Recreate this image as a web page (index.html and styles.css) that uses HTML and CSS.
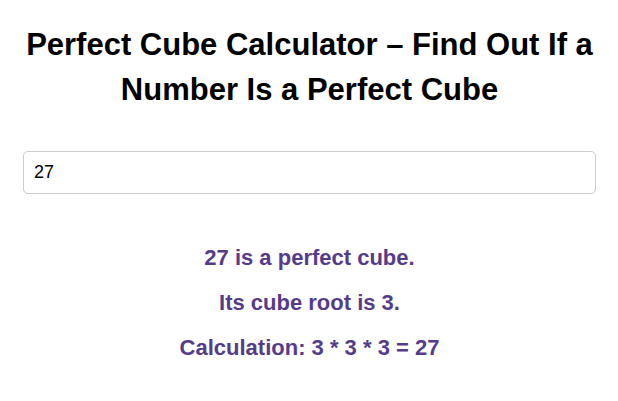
FILE: index.html
```html
<!DOCTYPE html>
<html lang="en">
    <head>
        <meta charset="UTF-8">
        <meta name="viewport" content="width=device-width, initial-scale=1.0">
        <title>Perfect Cube Calculator</title>
        <link rel="stylesheet" href="styles.css">
    </head>
    <body>
        <div class="calc">
            <h1 class="title">Perfect Cube Calculator – Find Out If a Number Is a Perfect Cube</h1>

            <input class="cube-input" type="text" value="27">

            <div class="result">
                <p>27 is a perfect cube.</p>
                <p>Its cube root is 3.</p>
                <p>Calculation: 3 * 3 * 3 = 27</p>
            </div>
        </div>
    </body>
</html>
```

FILE: styles.css
```css
body
{
    margin: 0;
    background-color: white;
    color: black;
    font-family: "Liberation Sans", Arial, sans-serif;
}

.calc
{
    padding: 22px 22px 0 23px;
}

.title
{
    margin: 0;
    font-size: 31px;
    font-weight: bold;
    line-height: 45px;
    text-align: center;
}

.cube-input
{
    display: block;
    box-sizing: border-box;
    width: 100%;
    height: 43px;
    margin-top: 39px;
    padding: 0 10px;
    border: 1px solid #cccccc;
    border-radius: 5px;
    font-family: "Liberation Sans", Arial, sans-serif;
    font-size: 18px;
    color: black;
}

.result
{
    margin-top: 41px;
    text-align: center;
    color: #553c8b;
    font-size: 22px;
    font-weight: bold;
}

.result p
{
    margin: 0;
    line-height: 45px;
}
```
